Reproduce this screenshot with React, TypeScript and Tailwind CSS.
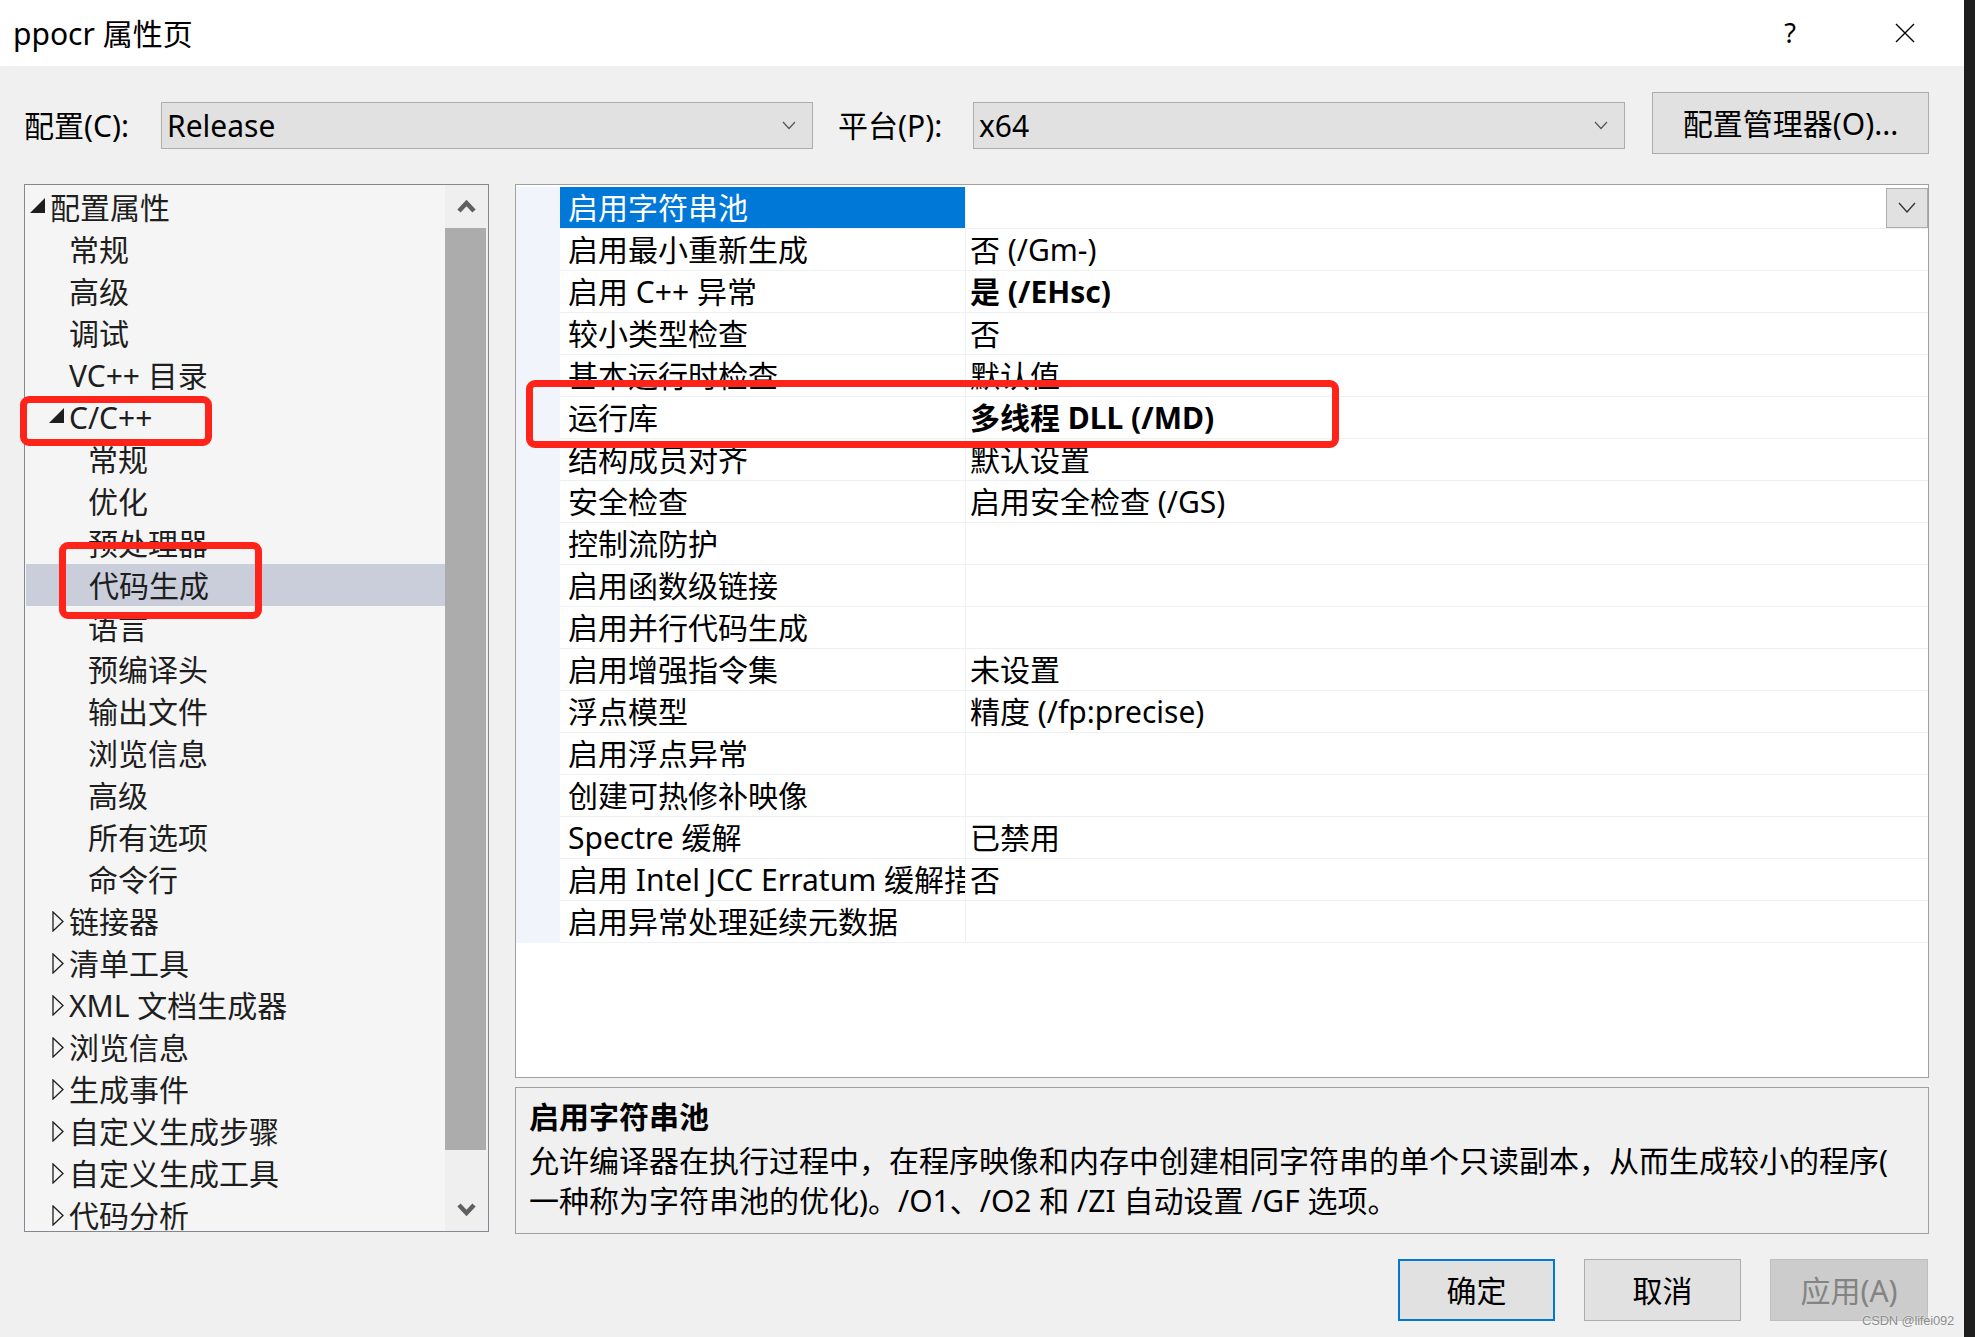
import React from 'react';

type TreeItem = { label: string; level: 0 | 1 | 2; arrow?: 'open' | 'closed'; selected?: boolean };

const TREE: TreeItem[] = [
  { label: '配置属性', level: 0, arrow: 'open' },
  { label: '常规', level: 1 },
  { label: '高级', level: 1 },
  { label: '调试', level: 1 },
  { label: 'VC++ 目录', level: 1 },
  { label: 'C/C++', level: 1, arrow: 'open' },
  { label: '常规', level: 2 },
  { label: '优化', level: 2 },
  { label: '预处理器', level: 2 },
  { label: '代码生成', level: 2, selected: true },
  { label: '语言', level: 2 },
  { label: '预编译头', level: 2 },
  { label: '输出文件', level: 2 },
  { label: '浏览信息', level: 2 },
  { label: '高级', level: 2 },
  { label: '所有选项', level: 2 },
  { label: '命令行', level: 2 },
  { label: '链接器', level: 1, arrow: 'closed' },
  { label: '清单工具', level: 1, arrow: 'closed' },
  { label: 'XML 文档生成器', level: 1, arrow: 'closed' },
  { label: '浏览信息', level: 1, arrow: 'closed' },
  { label: '生成事件', level: 1, arrow: 'closed' },
  { label: '自定义生成步骤', level: 1, arrow: 'closed' },
  { label: '自定义生成工具', level: 1, arrow: 'closed' },
  { label: '代码分析', level: 1, arrow: 'closed' },
];

// indent so the text lands at 50 / 69 / 88px
const INDENT = ['pl-[5px]', 'pl-[24px]', 'pl-[43px]'];

type Prop = { name: string; value?: string; bold?: boolean };

const PROPS: Prop[] = [
  { name: '启用字符串池' },
  { name: '启用最小重新生成', value: '否 (/Gm-)' },
  { name: '启用 C++ 异常', value: '是 (/EHsc)', bold: true },
  { name: '较小类型检查', value: '否' },
  { name: '基本运行时检查', value: '默认值' },
  { name: '运行库', value: '多线程 DLL (/MD)', bold: true },
  { name: '结构成员对齐', value: '默认设置' },
  { name: '安全检查', value: '启用安全检查 (/GS)' },
  { name: '控制流防护' },
  { name: '启用函数级链接' },
  { name: '启用并行代码生成' },
  { name: '启用增强指令集', value: '未设置' },
  { name: '浮点模型', value: '精度 (/fp:precise)' },
  { name: '启用浮点异常' },
  { name: '创建可热修补映像' },
  { name: 'Spectre 缓解', value: '已禁用' },
  { name: '启用 Intel JCC Erratum 缓解措施', value: '否' },
  { name: '启用异常处理延续元数据' },
];

const SmallChevron = () => (
  <svg width="14" height="9" viewBox="0 0 14 9" className="shrink-0">
    <polyline points="1,1 7,7.5 13,1" fill="none" stroke="#555" strokeWidth="1.2" />
  </svg>
);

const Combo = ({ value }: { value: string }) => (
  <div className="w-[652px] h-[47px] mt-[10px] flex items-center justify-between pl-[5px] pr-[16px] bg-[#e1e1e1] border border-[#adadad]">
    <span>{value}</span>
    <SmallChevron />
  </div>
);

const Arrow = ({ kind }: { kind?: 'open' | 'closed' }) => (
  <span className="w-[20px] h-[42px] shrink-0 flex items-center">
    {kind === 'open' && (
      <svg width="15" height="15" viewBox="0 0 15 15" className="-mt-[4px]">
        <polygon points="15,0 15,15 0,15" fill="#1e1e1e" />
      </svg>
    )}
    {kind === 'closed' && (
      <svg width="12" height="21" viewBox="0 0 12 21" className="ml-[3px]">
        <polygon points="1,1 11,10.5 1,20" fill="none" stroke="#1e1e1e" strokeWidth="1.3" />
      </svg>
    )}
  </span>
);

const ScrollChevron = ({ up }: { up?: boolean }) => (
  <svg width="19" height="15" viewBox="0 0 19 15">
    <polyline
      points={up ? '2,12 9.5,4 17,12' : '2,3 9.5,11 17,3'}
      fill="none"
      stroke="#606060"
      strokeWidth="4.5"
    />
  </svg>
);

const Tree = () => (
  <div className="w-[465px] h-[1048px] border border-[#828790] bg-[#f5f5f5] flex">
    <div className="w-[420px] h-full overflow-hidden pt-[1px]">
      {TREE.map((item, i) => (
        <div
          key={i}
          className={`h-[42px] flex items-center whitespace-nowrap text-[#1e1e1e] ${INDENT[item.level]} ${
            item.selected ? 'bg-[#cacdda] ml-[1px]' : ''
          }`}
        >
          <Arrow kind={item.arrow} />
          <span>{item.label}</span>
        </div>
      ))}
    </div>
    <div className="w-[43px] h-full bg-[#efefef] flex flex-col">
      <div className="h-[43px] flex items-center justify-center">
        <ScrollChevron up />
      </div>
      <div className="h-[922px] bg-[#acacac] mr-[2px]" />
      <div className="h-[38px]" />
      <div className="h-[43px] flex items-center justify-center">
        <ScrollChevron />
      </div>
    </div>
  </div>
);

const PropertyGrid = () => (
  <div className="w-[1414px] h-[894px] border border-[#a0a0a0] bg-white pt-[2px]">
    {PROPS.map((p, i) => (
      <div key={i} className="h-[42px] flex">
        <div className="w-[44px] bg-[#f1f4fa]" />
        <div className="flex-1 flex border-b border-[#eef0f5]">
          <div
            className={`w-[406px] overflow-hidden whitespace-nowrap flex items-center pl-[8px] border-r border-[#eef0f5] ${
              i === 0 ? 'bg-[#0078d7] text-white' : ''
            }`}
          >
            {p.name}
          </div>
          <div className={`flex-1 flex items-center justify-between pl-[4px] ${p.bold ? 'font-bold' : ''}`}>
            <span className="whitespace-nowrap">{p.value}</span>
            {i === 0 && (
              <div className="w-[42px] h-[40px] bg-[#e1e1e1] border border-[#adadad] flex items-center justify-center">
                <svg width="18" height="11" viewBox="0 0 18 11">
                  <polyline points="1,1 9,10 17,1" fill="none" stroke="#333" strokeWidth="1.3" />
                </svg>
              </div>
            )}
          </div>
        </div>
      </div>
    ))}
  </div>
);

const Button = ({ label, primary, disabled }: { label: string; primary?: boolean; disabled?: boolean }) => (
  <div
    className={`h-[62px] flex items-center justify-center ${
      primary
        ? 'w-[157px] bg-[#e1e1e1] border-2 border-[#0078d7]'
        : disabled
        ? 'w-[158px] bg-[#cccccc] border border-[#bfbfbf] text-[#838383]'
        : 'w-[157px] bg-[#e1e1e1] border border-[#adadad]'
    }`}
  >
    {label}
  </div>
);

const RedBox = ({ className }: { className: string }) => (
  <div className={`absolute border-[7px] border-[#fe2419] rounded-[9px] pointer-events-none ${className}`} />
);

export default function App() {
  return (
    <div className="relative w-[1975px] h-[1337px] flex overflow-hidden text-[30px] text-black font-['Noto_Sans','Noto_Sans_CJK_SC',sans-serif]">
      <div className="w-[1964px] h-full flex flex-col">
        {/* title bar */}
        <div className="h-[66px] bg-white flex items-center pl-[13px]">
          <span className="flex-1">ppocr 属性页</span>
          <div className="w-[40px] flex justify-center text-[27px]">?</div>
          <div className="w-[40px] ml-[75px] mr-[39px] flex justify-center">
            <svg width="20" height="20" viewBox="0 0 20 20">
              <path d="M1 1 L19 19 M19 1 L1 19" stroke="#000" strokeWidth="1.4" />
            </svg>
          </div>
        </div>

        <div className="flex-1 bg-[#f0f0f0] flex flex-col pl-[24px] pr-[35px]">
          {/* configuration row */}
          <div className="h-[88px] pt-[26px] flex items-start">
            <div className="w-[137px] h-[47px] mt-[10px] flex items-center">配置(C):</div>
            <Combo value="Release" />
            <div className="w-[160px] h-[47px] mt-[10px] pl-[25px] flex items-center">平台(P):</div>
            <Combo value="x64" />
            <div className="w-[277px] h-[62px] ml-[27px] bg-[#e1e1e1] border border-[#adadad] flex items-center justify-center">
              配置管理器(O)...
            </div>
          </div>

          {/* main area */}
          <div className="mt-[30px] flex gap-[26px]">
            <Tree />
            <div className="w-[1414px] flex flex-col gap-[9px]">
              <PropertyGrid />
              <div className="h-[147px] border border-[#a0a0a0] pl-[13px] pt-[9px]">
                <div className="font-bold leading-[40px]">启用字符串池</div>
                <div className="mt-[4px] leading-[40px] whitespace-nowrap">
                  允许编译器在执行过程中，在程序映像和内存中创建相同字符串的单个只读副本，从而生成较小的程序(
                  <br />
                  一种称为字符串池的优化)。/O1、/O2 和 /ZI 自动设置 /GF 选项。
                </div>
              </div>
            </div>
          </div>

          {/* buttons */}
          <div className="mt-[25px] flex justify-end gap-[29px] pr-[1px]">
            <Button label="确定" primary />
            <Button label="取消" />
            <Button label="应用(A)" disabled />
          </div>
        </div>
      </div>
      <div className="w-[11px] h-full bg-[#1e1e1e]" />

      {/* annotation boxes */}
      <RedBox className="left-[20px] top-[396px] w-[192px] h-[50px]" />
      <RedBox className="left-[59px] top-[542px] w-[203px] h-[77px]" />
      <RedBox className="left-[526px] top-[380px] w-[813px] h-[68px]" />

      <div className="absolute left-[1862px] top-[1313px] text-[13px] leading-[16px] tracking-[-0.2px] whitespace-nowrap text-[#8c8c8c] font-['Liberation_Sans',sans-serif] [text-shadow:0_0_2px_#fff]">
        CSDN @lifei092
      </div>
    </div>
  );
}
